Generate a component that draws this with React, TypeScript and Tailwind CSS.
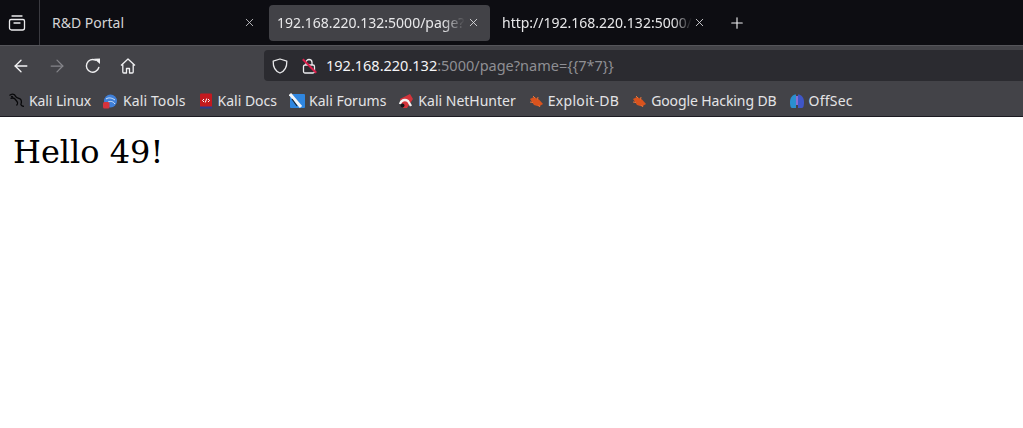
import React from "react";
import { ArrowLeft, ArrowRight, X, Plus } from "lucide-react";

const bookmarks = [
    { label: "Kali Linux", icon: "dragon", cls: "tracking-[-0.1px]" },
    { label: "Kali Tools", icon: "tools", cls: "tracking-[0.1px]" },
    { label: "Kali Docs", icon: "docs", cls: "" },
    { label: "Kali Forums", icon: "forums", cls: "" },
    { label: "Kali NetHunter", icon: "nethunter", cls: "" },
    { label: "Exploit-DB", icon: "bug", cls: "tracking-[0.3px]" },
    { label: "Google Hacking DB", icon: "bug", cls: "tracking-[-0.1px]" },
    { label: "OffSec", icon: "offsec", cls: "tracking-[0.2px]" },
];

const BookmarkIcon = ({ kind }: { kind: string }) => {
    if (kind === "dragon") {
        return (
            <svg width="16" height="16" viewBox="0 0 16 16" fill="none" stroke="#08080a" strokeWidth="1.300">
                <path d="M0.500 2.500C2 1 4 .8 5.500 1.800l1.500 2c1 1.500 3 1 4.500 2.500s1 3 .5 4.500c-.5 1.200 1 2.500 3 2.500" />
                <path d="M1.500 5.500c2-.8 3.500-.5 4.500.5l2 2.500c1 1 .5 3-.5 4" />
                <path d="M2 3.500 4 4" />
            </svg>
        );
    }
    if (kind === "tools") {
        return (
            <svg width="16" height="16" viewBox="0 0 16 16" className="-ml-[1px] mr-[1px]">
                <circle cx="8.500" cy="8" r="6.500" fill="#3f7fd8" />
                <path d="M4 6c3-2 6-1 9 1M6 9c2-1 5-1 7 2" stroke="#d5e6fa" strokeWidth="1" fill="none" />
                <rect x="1" y="9" width="6.500" height="6.500" rx="1.500" fill="#d6333c" />
            </svg>
        );
    }
    if (kind === "docs") {
        return (
            <svg width="16" height="16" viewBox="0 0 16 16">
                <rect x="2" y="0.500" width="12" height="14" rx="1" fill="#c3191f" />
                <rect x="2" y="13.500" width="12" height="2" fill="#2b3a8c" />
                <path d="M6 6 4.500 7.500 6 9M10 6l1.500 1.500L10 9M8.700 5.500 7.300 9.500" stroke="#fff" strokeWidth="1" fill="none" />
            </svg>
        );
    }
    if (kind === "forums") {
        return (
            <svg width="16" height="16" viewBox="0 0 16 16">
                <rect x="1" y="1" width="15" height="14" rx="1" fill="#2f86e0" />
                <path d="M1 1 12 14" stroke="#f2f5f8" strokeWidth="3" />
                <path d="M3 6 8 13" stroke="#1d2530" strokeWidth="1.200" />
            </svg>
        );
    }
    if (kind === "nethunter") {
        return (
            <svg width="16" height="16" viewBox="0 0 16 16">
                <path d="M2 6 12 1l3 5-6 9H5z" fill="#d3343b" />
                <path d="M2 11c1-4 5-5 8-3l3 5" stroke="#f4f4f4" strokeWidth="2.400" fill="none" />
                <circle cx="4.500" cy="12.500" r="2" fill="#15151a" />
            </svg>
        );
    }
    if (kind === "bug") {
        return (
            <svg width="16" height="16" viewBox="0 0 16 16">
                <path d="M2 6 6 4l5 2.500L15 11l-4 2.500-5-1.500z" fill="#d9531e" />
                <path d="M5 3 7 5M10 4 9.500 6.500M2 9l3 .5M12 14l-1.500-2" stroke="#e8743a" strokeWidth="1" />
            </svg>
        );
    }
    return (
        <svg width="16" height="16" viewBox="0 0 16 16">
            <path d="M1 9C1 4 4 1.500 7 1.500V15H3C1.500 15 1 12 1 9z" fill="#2a8fd0" />
            <path d="M15 9c0-5-3-7.500-6-7.500V15h4c1.500 0 2-3 2-6z" fill="#3f56c8" />
            <rect x="7" y="3" width="2" height="9" fill="#8a6fd0" />
        </svg>
    );
};

export default function App() {
    return (
        <div className="h-[428px] w-[1023px] overflow-hidden bg-white font-['Noto_Sans',sans-serif]">
            {/* Tab strip */}
            <div className="flex h-[45px] items-center bg-[#0d0d12]">
                <div className="flex h-[45px] w-[40px] shrink-0 items-center justify-center border-r border-[#3a3a40] pr-[6px]">
                    <svg width="18" height="18" viewBox="0 0 18 18" fill="none" stroke="#ececee" strokeWidth="1.300">
                        <path d="M4 2h10M3 5.500h12a1.500 1.500 0 0 1 1.500 1.500v7a2 2 0 0 1-2 2h-11a2 2 0 0 1-2-2V7A1.500 1.500 0 0 1 3 5.500zM6 9h6" strokeLinecap="round" />
                    </svg>
                </div>
                <div className="flex h-[36px] w-[229px] shrink-0 items-center justify-between pl-[12px] pr-[13px]">
                    <span className="text-[14px] text-[#d4d4d6]">R&amp;D Portal</span>
                    <X size={13} strokeWidth={1.5} color="#d4d4d6" className="shrink-0" />
                </div>
                <div className="flex h-[36px] w-[221px] shrink-0 items-center rounded-[4px] bg-[#424247] pl-[8px] pr-[10px]">
                    <span className="w-[188px] overflow-hidden whitespace-nowrap text-[14px] text-[#e8e8ea] [mask-image:linear-gradient(to_right,black_88%,transparent)]">
                        192.168.220.132:5000/page?n
                    </span>
                    <X size={13} strokeWidth={1.5} color="#e8e8ea" className="ml-auto shrink-0" />
                </div>
                <div className="flex h-[36px] w-[225px] shrink-0 items-center pl-[12px] pr-[9px]">
                    <span className="whitespace-nowrap text-[14px] text-[#e8e8ea] [mask-image:linear-gradient(to_right,black_90%,transparent)]">
                        http://192.168.220.132:5000/
                    </span>
                    <X size={13} strokeWidth={1.5} color="#e8e8ea" className="ml-auto shrink-0" />
                </div>
                <Plus size={18} strokeWidth={1.5} color="#f0f0f2" className="ml-[13px]" />
            </div>

            {/* Navigation bar */}
            <div className="flex h-[40px] items-center border-t border-[#55555a] bg-[#434348]">
                <div className="flex w-[264px] shrink-0 items-center pl-[11px]">
                    <ArrowLeft size={20} strokeWidth={1.600} color="#f4f4f6" />
                    <ArrowRight size={20} strokeWidth={1.500} color="#85858a" className="ml-[16px]" />
                    <svg width="18" height="18" viewBox="0 0 18 18" fill="none" className="ml-[17px]">
                        <path d="M14.800 10.500A6.300 6.300 0 1 1 11.500 3.200" stroke="#f0f0f2" strokeWidth="1.400" strokeLinecap="round" />
                        <path d="M10 1.800 16 1.500v5.500z" fill="#f0f0f2" />
                    </svg>
                    <svg width="18" height="18" viewBox="0 0 18 18" fill="none" stroke="#f0f0f2" strokeWidth="1.300" strokeLinejoin="round" className="ml-[17px]">
                        <path d="M2 8.500 9 2l7 6.500M3.800 7.500V15a1 1 0 0 0 1 1h2.700v-4.500h3V16h2.700a1 1 0 0 0 1-1V7.500" />
                    </svg>
                </div>
                <div className="flex h-[31px] flex-1 items-center rounded-l-[4px] bg-[#2b2b30] pl-[8px]">
                    <svg width="16" height="16" viewBox="0 0 16 16" fill="none" stroke="#e8e8ea" strokeWidth="1.300" strokeLinejoin="round">
                        <path d="M8 1 14.800 3.200C15 9 13 13 8 15 3 13 1 9 1.200 3.200z" />
                    </svg>
                    <span className="relative ml-[13px] flex h-[16px] w-[16px] items-center justify-center">
                        <svg width="16" height="16" viewBox="0 0 16 16" fill="none" stroke="#ececee" strokeWidth="1.300">
                            <path d="M5 7V4.500a3 3 0 0 1 6 0V7" />
                            <rect x="2.500" y="7" width="11" height="8" rx="1.500" />
                        </svg>
                        <span className="absolute -left-[1px] top-[7px] h-[2px] w-[19px] rotate-45 bg-[#d81e4a]" />
                    </span>
                    <span className="ml-[9px] text-[14.5px] text-[#f4f4f6]">
                        192.168.220.132<span className="text-[#8f8f94]">:5000/page?name={"{{7*7}}"}</span>
                    </span>
                </div>
            </div>

            {/* Bookmarks bar */}
            <div className="flex h-[32px] items-center gap-[12px] border-b border-[#1c1b22] bg-[#434348] pl-[9px]">
                {bookmarks.map((b) => (
                    <div key={b.label} className="flex items-center gap-[4px]">
                        <BookmarkIcon kind={b.icon} />
                        <span className={`text-[14px] text-[#e4e4e6] ${b.cls}`}>{b.label}</span>
                    </div>
                ))}
            </div>

            {/* Page content */}
            <div className="px-[13px] pt-[13px] font-['DejaVu_Serif',serif] text-[32px] leading-[44px] text-black">
                Hello 49!
            </div>
        </div>
    );
}
